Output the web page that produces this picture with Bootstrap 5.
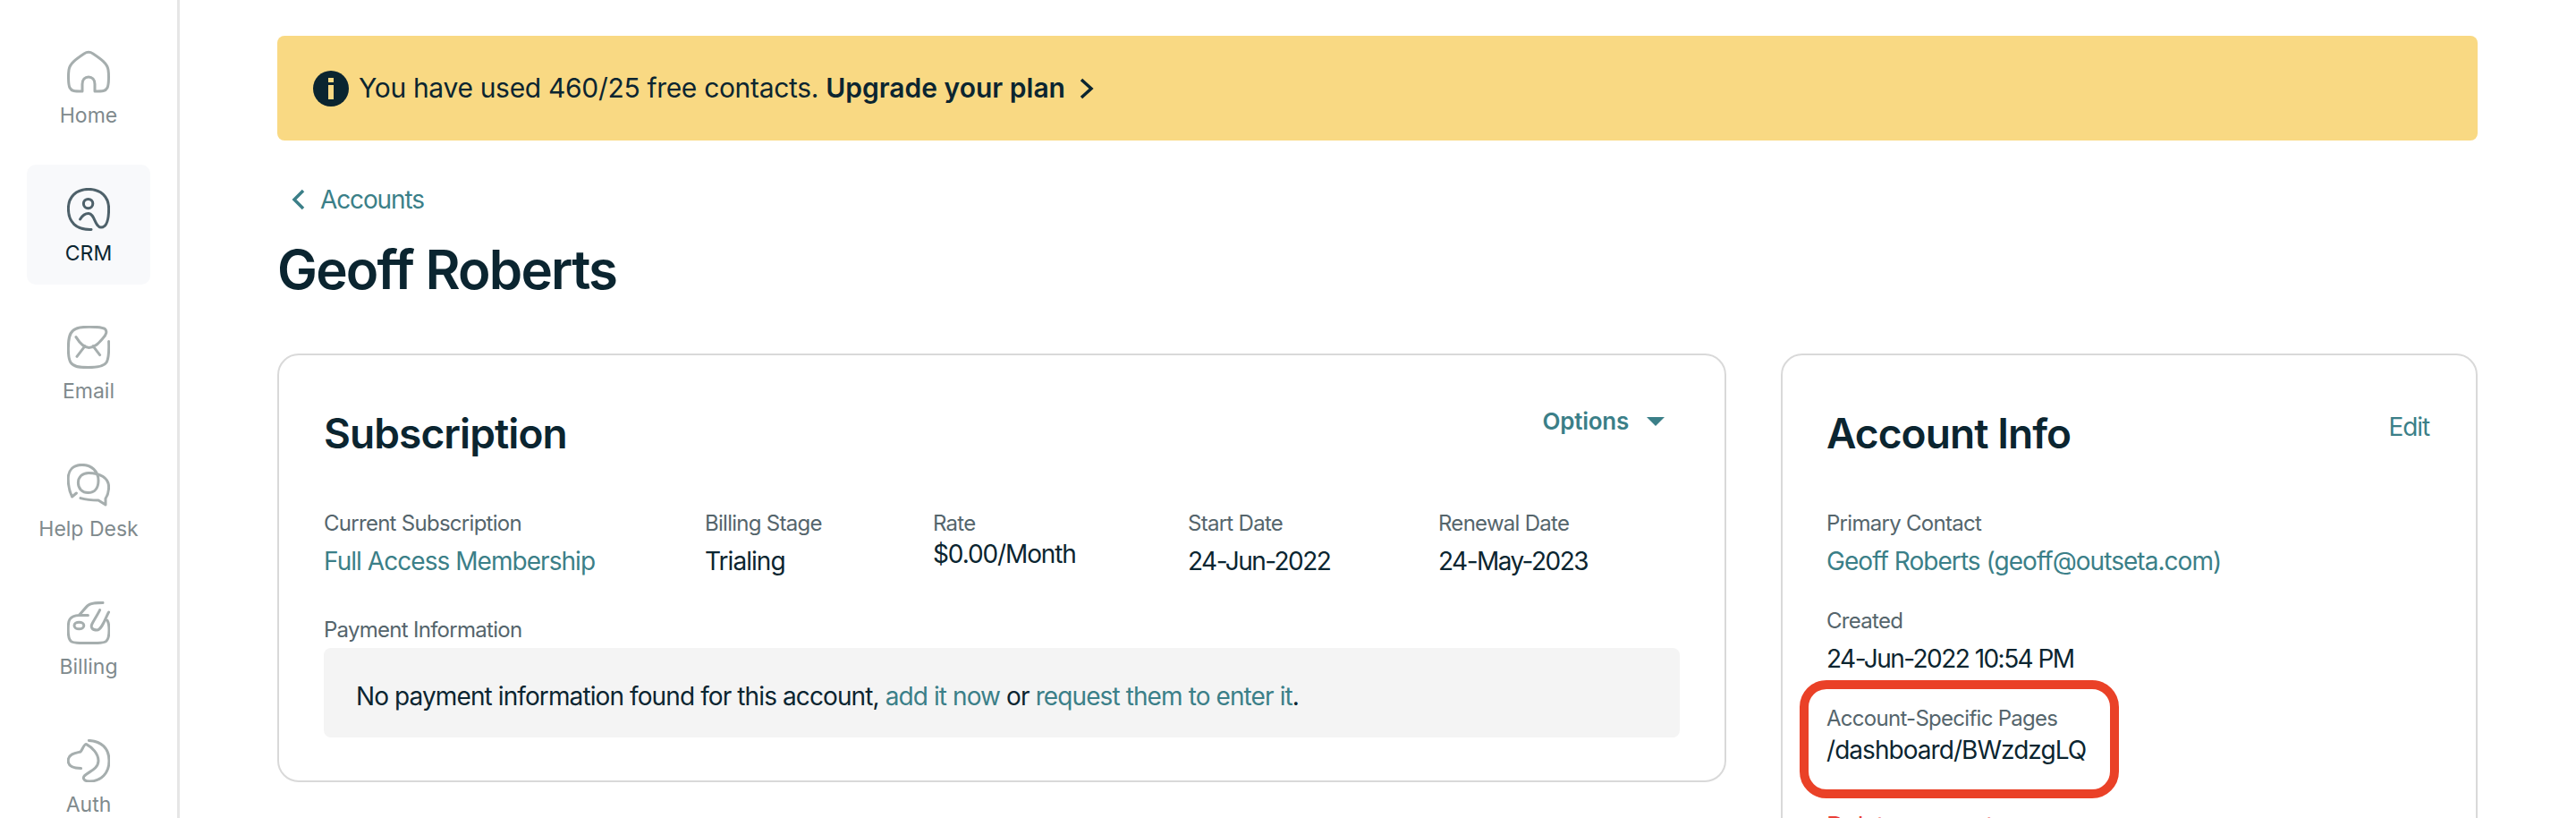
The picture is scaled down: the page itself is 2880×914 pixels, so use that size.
<!DOCTYPE html>
<html lang="en">
<head>
  <meta charset="UTF-8">
  <title>Geoff Roberts - CRM</title>
  <link href="https://cdn.jsdelivr.net/npm/bootstrap@5.3.0/dist/css/bootstrap.min.css" rel="stylesheet">
  <style>
    html, body {
      height: 914px;
      overflow: hidden;
    }

    body {
      font-family: Inter, "Liberation Sans", sans-serif;
      color: #0b2530;
      letter-spacing: -0.02em;
    }

    a {
      color: #3b7f88;
      text-decoration: none;
    }

    /* Sidebar */
    .side-rail {
      flex: 0 0 200px;
      height: 914px;
      padding: 30px 30px 0 30px;
      border-right: 3px solid #e6e6e6;
      gap: 20px;
    }

    .rail-item {
      flex: 0 0 134px;
      width: 138px;
      padding-top: 26px;
      border-radius: 10px;
      color: #7f8a8d;
      font-size: 23px;
      line-height: 34px;
      letter-spacing: 0;
    }

    .rail-item svg {
      width: 48px;
      height: 48px;
      margin-bottom: 8px;
      fill: none;
      stroke: #a6aeae;
      stroke-width: 1.5;
      stroke-linecap: round;
      stroke-linejoin: round;
    }

    .rail-item.is-active {
      background: #f8f9fb;
      color: #0b2530;
    }

    .rail-item.is-active svg {
      stroke: #4e616a;
    }

    /* Main column */
    .main-col {
      padding: 40px 110px 0 109px;
    }

    .plan-banner {
      height: 117px;
      padding-left: 40px;
      background: #f9d983;
      border-radius: 8px;
      font-size: 30px;
      gap: 11px;
    }

    .plan-banner strong {
      font-weight: 600;
      letter-spacing: 0;
    }

    .info-dot {
      flex: 0 0 40px;
      height: 40px;
      background: #0b2530;
      border-radius: 50%;
    }

    .back-link {
      margin: 46px 0 0 16px;
      font-size: 28px;
      line-height: 40px;
      letter-spacing: -0.04em;
      gap: 17px;
    }

    .page-title {
      margin: 23px 0 59px 0;
      font-size: 60px;
      line-height: 70px;
      font-weight: 600;
      letter-spacing: -0.03em;
    }

    .info-panel {
      height: 560px;
      padding: 57px 50px 0 50px;
      border: 2px solid #d9d9d9;
      border-radius: 24px;
    }

    .sub-panel {
      flex: 0 0 1620px;
      height: 479px;
    }

    .acct-panel {
      margin-left: 61px;
      padding-left: 49px;
      padding-right: 52px;
    }

    .panel-title {
      margin: 0;
      font-size: 46px;
      line-height: 60px;
      font-weight: 600;
      letter-spacing: -0.02em;
    }

    .opt-link {
      margin: 0 17px 0 0;
      font-size: 26px;
      line-height: 34px;
      font-weight: 600;
      letter-spacing: -0.01em;
      gap: 20px;
    }

    .opt-caret {
      width: 0;
      height: 0;
      border-left: 10px solid transparent;
      border-right: 10px solid transparent;
      border-top: 10px solid #3b7f88;
    }

    .edit-link {
      margin-top: 5px;
      font-size: 28px;
      line-height: 36px;
      letter-spacing: -0.04em;
    }

    .field-label {
      font-size: 24px;
      line-height: 32px;
      letter-spacing: -0.03em;
      color: #55656c;
    }

    .field-value {
      font-size: 28px;
      line-height: 40px;
      letter-spacing: -0.034em;
      margin-top: 6px;
    }

    .date-value {
      letter-spacing: -0.055em;
    }

    .rate-value {
      margin-top: -2px;
      letter-spacing: -0.04em;
    }

    .tight-value {
      margin-top: -1px;
    }

    .field-row {
      margin-top: 55px;
    }

    .field-gap {
      margin-top: 31px;
    }

    .f-sub { flex: 0 0 426px; }
    .f-stage { flex: 0 0 255px; }
    .f-rate { flex: 0 0 285px; }
    .f-start { flex: 0 0 280px; }

    .pay-label {
      margin: 41px 0 4px 0;
    }

    .pay-box {
      height: 100px;
      padding: 7px 0 0 36px;
      background: #f4f4f4;
      border-radius: 8px;
      font-size: 28px;
      letter-spacing: -0.032em;
    }

    .red-mark {
      position: absolute;
      left: 19px;
      top: 363px;
      width: 357px;
      height: 132px;
      border: 10px solid #ea4127;
      border-radius: 30px;
    }

    .del-row {
      margin-top: 45px;
    }

    .del-link {
      color: #ea4038;
    }
  </style>
</head>
<body>
<div class="d-flex">
  <!-- Sidebar -->
  <nav class="side-rail d-flex flex-column align-items-center">
    <a class="rail-item d-flex flex-column align-items-center" href="#">
      <svg viewBox="0 0 24 24"><path d="M8.5 23C4 23 2.5 23 1.5 21C.5 19 .7 13 1 11C1.5 7.5 5 5 9.5 2C11 1 13 1 14.5 2C19 5 22.5 7.5 23 11C23.3 13 23.5 19 22.5 21C21.5 23 20 23 15.5 23V19C15.5 16.5 14 15 12 15C10 15 8.5 16.5 8.5 19Z"/></svg>
      Home
    </a>
    <a class="rail-item is-active d-flex flex-column align-items-center" href="#">
      <svg viewBox="0 0 24 24"><path d="M13.5 23.2C5 23.5 .7 19 .7 11.5C.7 5 5 .7 12 .7C19 .7 23.3 5 23.3 11.5C23.3 17 22.5 22 19 22C15.5 22 15.5 14.3 12 14.3C10 14.3 8.5 15.5 7.3 17.5"/><circle cx="11.8" cy="8.8" r="2.6"/></svg>
      CRM
    </a>
    <a class="rail-item d-flex flex-column align-items-center" href="#">
      <svg viewBox="0 0 24 24"><path d="M23.3 8.8C23.5 14 23.5 18 22 20.5C20.5 23 16 23.3 11.8 23.3C7 23.3 3.5 23 2 20.5C.5 18 .7 15 .7 12.2C.7 8 1 4.5 3.5 2.5C5.5 .8 9 .6 12.5 .6C16 .6 19.5 .6 21.2 1.8C22.5 3 22 5 20 7C17.5 9.8 15.5 12.2 12.2 12.2C9.5 12.2 7 9.5 5 6.3M5.5 17.2L10 11.3M18.3 16.3L14.5 11.3"/></svg>
      Email
    </a>
    <a class="rail-item d-flex flex-column align-items-center" href="#">
      <svg viewBox="0 0 24 24"><path d="M5.2 16.5L2.8 18.5C1 15 .6 12 .6 8.5C.6 3.5 3.5 .7 8.3 .7C13.5 .7 17.5 4 17.5 9.5C17.5 13.5 15.5 16.3 11.7 16.3C8.5 16.3 6.2 14 6.2 10.8C6.2 7.5 8.5 5.2 12 5.2C18.5 5.2 23.3 8 23.3 13C23.3 16 22.5 18 21.5 19.5L21.5 23L17.5 20.5C14 20.5 11 20.3 7.5 19.3"/></svg>
      Help Desk
    </a>
    <a class="rail-item d-flex flex-column align-items-center" href="#">
      <svg viewBox="0 0 24 24"><path d="M20 .7C16.5 .7 13.5 .8 12 2C10 3.5 8.5 6 6.7 7.7C4 7.8 2.5 8.5 1.5 10C.5 11.5 .6 14 .6 16C.6 19 .8 21.5 2.5 22.5C4.5 23.5 8 23.3 12 23.3C16 23.3 19.5 23.5 21.5 22.5C23.3 21.5 23.5 19 23.5 16C23.5 14 23.3 12 22.5 10.7M6.7 7.7L11.7 7.7M23.3 6C21.5 9 19.5 16 16.7 16C14 16 13 14.5 14 12.5C15 10.5 17 7.5 18.3 4.8"/><ellipse cx="6.7" cy="13.5" rx="2.7" ry="1.9"/></svg>
      Billing
    </a>
    <a class="rail-item d-flex flex-column align-items-center" href="#">
      <svg viewBox="0 0 24 24"><path d="M12.2 .7C19 1 23.5 5 23.5 12C23.5 19 19 23.5 12.5 23.5C10 23.5 8.5 22.2 9.5 20.7C11 18.5 17.5 17 17.5 12C17.5 8 14 4.5 10.8 2.8C9.5 2.5 8.5 6 7.5 7C5.5 7.5 .6 8 .6 12C.6 15 3.5 16.2 7.8 16.2"/></svg>
      Auth
    </a>
  </nav>

  <!-- Main -->
  <main class="main-col flex-grow-1">
    <div class="plan-banner d-flex align-items-center">
      <span class="info-dot d-flex align-items-center justify-content-center">
        <svg width="8" height="24" viewBox="0 0 8 24"><rect x="1" y="0" width="6" height="5" fill="#f9d983"/><rect x="1" y="8" width="6" height="16" fill="#f9d983"/></svg>
      </span>
      <span>You have used 460/25 free contacts. <strong>Upgrade your plan</strong></span>
      <svg class="ms-1" width="18" height="24" viewBox="0 0 18 24"><path d="M3 2L14 12L3 22" fill="none" stroke="#0b2530" stroke-width="3.5"/></svg>
    </div>

    <a class="back-link d-flex align-items-center" href="#">
      <svg width="15" height="24" viewBox="0 0 15 24"><path d="M13 2L3 12L13 22" fill="none" stroke="#3b7f88" stroke-width="3.5"/></svg>
      Accounts
    </a>
    <h1 class="page-title">Geoff Roberts</h1>

    <div class="d-flex">
      <!-- Subscription -->
      <section class="info-panel sub-panel">
        <div class="d-flex justify-content-between align-items-start">
          <h2 class="panel-title">Subscription</h2>
          <a class="opt-link d-flex align-items-center" href="#">Options <span class="opt-caret"></span></a>
        </div>
        <div class="field-row d-flex">
          <div class="f-sub">
            <div class="field-label">Current Subscription</div>
            <div class="field-value"><a href="#">Full Access Membership</a></div>
          </div>
          <div class="f-stage">
            <div class="field-label">Billing Stage</div>
            <div class="field-value">Trialing</div>
          </div>
          <div class="f-rate">
            <div class="field-label">Rate</div>
            <div class="field-value rate-value">$0.00/Month</div>
          </div>
          <div class="f-start">
            <div class="field-label">Start Date</div>
            <div class="field-value date-value">24-Jun-2022</div>
          </div>
          <div>
            <div class="field-label">Renewal Date</div>
            <div class="field-value date-value">24-May-2023</div>
          </div>
        </div>
        <div class="field-label pay-label">Payment Information</div>
        <div class="pay-box d-flex align-items-center">
          <span>No payment information found for this account, <a href="#">add it now</a> or <a href="#">request them to enter it</a>.</span>
        </div>
      </section>

      <!-- Account info -->
      <section class="info-panel acct-panel flex-grow-1 position-relative">
        <div class="d-flex justify-content-between align-items-start">
          <h2 class="panel-title">Account Info</h2>
          <a class="edit-link" href="#">Edit</a>
        </div>
        <div class="field-row">
          <div class="field-label">Primary Contact</div>
          <div class="field-value"><a href="#">Geoff Roberts (geoff@outseta.com)</a></div>
        </div>
        <div class="field-gap">
          <div class="field-label">Created</div>
          <div class="field-value date-value">24-Jun-2022 10:54 PM</div>
        </div>
        <div class="field-gap">
          <div class="field-label">Account-Specific Pages</div>
          <div class="field-value tight-value">/dashboard/BWzdzgLQ</div>
        </div>
        <div class="del-row field-value"><a class="del-link" href="#">Delete account</a></div>
        <div class="red-mark"></div>
      </section>
    </div>
  </main>
</div>
<script src="https://cdn.jsdelivr.net/npm/bootstrap@5.3.0/dist/js/bootstrap.bundle.min.js"></script>
</body>
</html>
